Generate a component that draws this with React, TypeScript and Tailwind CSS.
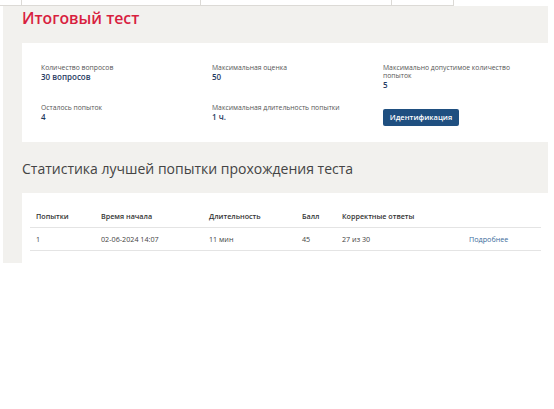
const font = { fontFamily: '"Open Sans", "Noto Sans", sans-serif' };

type InfoProps = { label: string; value: string };

function Info({ label, value }: InfoProps) {
  return (
    <div className="w-[150px]">
      <div className="text-[6.8px] leading-[8px] text-[#555]">{label}</div>
      <div className="text-[8px] font-semibold leading-[10px] text-[#1f3a5f]">{value}</div>
    </div>
  );
}

const cols = [
  { title: "Попытки", w: "w-[65px]" },
  { title: "Время начала", w: "w-[108px]" },
  { title: "Длительность", w: "w-[93px]" },
  { title: "Балл", w: "w-[40px]" },
  { title: "Корректные ответы", w: "w-[127px]" },
  { title: "", w: "w-[78px]" }
];

const row = ["1", "02-06-2024 14:07", "11 мин", "45", "27 из 30"];

export default function App() {
  return (
    <div className="h-[409px] w-[554px] overflow-hidden bg-white" style={font}>
      {/* tabs */}
      <div className="flex h-[6px]">
        <div className="w-[21px] border-b border-[#dcdad6]" />
        <div className="w-[179px] border-b border-l border-[#dcdad6]" />
        <div className="w-[191px] border-b border-l border-[#dcdad6]" />
        <div className="w-[63px] border-b border-l border-r border-[#dcdad6]" />
      </div>

      <div className="ml-[3px] w-[545px] bg-[#f2f1ee] pl-[19px]">
        <div className="flex h-[37px] items-start pt-[2px]">
          <h1 className="text-[15.8px] font-semibold leading-[20px] text-[#d8203e]">Итоговый тест</h1>
        </div>

        <div className="w-[532px] bg-white pb-[16px] pl-[19px] pt-[21px]">
          <div className="grid grid-cols-[171px_171px_171px] gap-y-[14px]">
            <Info label="Количество вопросов" value="30 вопросов" />
            <Info label="Максимальная оценка" value="50" />
            <div className="w-[140px]">
              <div className="text-[6.8px] leading-[8px] text-[#555]">
                Максимально допустимое количество попыток
              </div>
              <div className="text-[8px] font-semibold leading-[10px] text-[#1f3a5f]">5</div>
            </div>
            <Info label="Осталось попыток" value="4" />
            <Info label="Максимальная длительность попытки" value="1 ч." />
            <div className="-mt-[2px]">
              <button
                className="h-[17px] w-[76px] rounded-[2px] bg-[#1f4f80] text-[7.5px] font-semibold text-white"
                type="button"
              >
                Идентификация
              </button>
            </div>
          </div>
        </div>

        <div className="pb-[14px] pt-[17px]">
          <h2 className="text-[14px] leading-[20px] text-[#444]">
            Статистика лучшей попытки прохождения теста
          </h2>
        </div>

        <div className="w-[532px] bg-white pb-[12px] pl-[8px] pt-[12px]">
          <div className="w-[511px]">
            <div className="flex h-[23px] items-center border-b border-[#e4e4e4]">
              {cols.map((c) => (
                <div key={c.title + c.w} className={`${c.w} pl-[6px] text-[7.2px] font-semibold text-[#333]`}>
                  {c.title}
                </div>
              ))}
            </div>
            <div className="flex h-[23px] items-center border-b border-[#e4e4e4]">
              {row.map((v, i) => (
                <div key={i} className={`${cols[i].w} pl-[6px] text-[7.2px] text-[#444]`}>
                  {v}
                </div>
              ))}
              <div className="w-[78px] pl-[6px] text-[7.2px] text-[#3b6c9c]">Подробнее</div>
            </div>
          </div>
        </div>
      </div>
    </div>
  );
}
